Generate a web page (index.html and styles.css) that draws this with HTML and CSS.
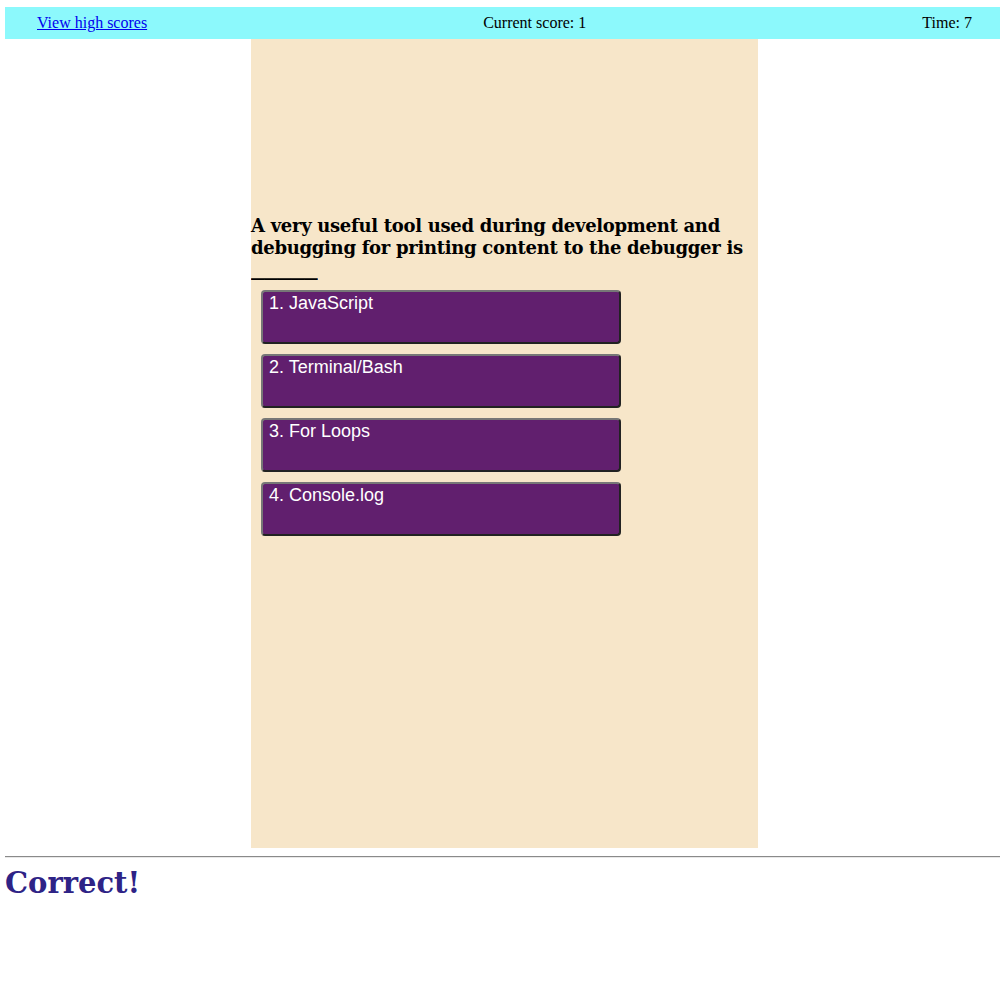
FILE: index.html
```html
<!DOCTYPE html>
<html lang="en">
<head>
<meta charset="utf-8">
<title>Code Quiz</title>
<link rel="stylesheet" href="styles.css">
</head>
<body>
  <header class="topbar">
    <a class="scores-link" href="#">View high scores</a>
    <span class="score">Current score: 1</span>
    <span class="timer">Time: 7</span>
  </header>
  <main class="quiz">
    <h2 class="question">A very useful tool used during development and debugging for printing content to the debugger is <span class="blank">_____</span></h2>
    <div class="choices">
      <button class="choice">1. JavaScript</button>
      <button class="choice">2. Terminal/Bash</button>
      <button class="choice">3. For Loops</button>
      <button class="choice">4. Console.log</button>
    </div>
  </main>
  <hr class="divider">
  <h1 class="result">Correct!</h1>
</body>
</html>
```
FILE: styles.css
```css
html, body {
  background: #ffffff;
}

body {
  margin: 7px 0 0 5px;
  font-family: "Liberation Serif", "Times New Roman", serif;
  font-size: 16px;
  color: #000;
}

.topbar {
  display: flex;
  justify-content: space-between;
  align-items: center;
  height: 32px;
  padding: 0 28px 0 32px;
  background: #8cf9fc;
  box-sizing: border-box;
}

.scores-link {
  color: #0000ee;
  text-decoration: underline;
}

.quiz {
  box-sizing: border-box;
  width: 507px;
  height: 809px;
  margin-left: 246px;
  padding-top: 176px;
  background: #f7e6c9;
}

.question {
  margin: 0;
  font-family: "DejaVu Serif", Georgia, serif;
  font-weight: bold;
  font-size: 18px;
  letter-spacing: -0.3px;
  line-height: 22px;
  color: #000;
}

.blank {
  display: inline-block;
  transform: scaleX(1.52);
  transform-origin: left center;
}

.choices {
  display: flex;
  flex-direction: column;
  gap: 10px;
  margin: 9px 0 0 10px;
}

.choice {
  box-sizing: border-box;
  width: 360px;
  height: 54px;
  padding: 1px 6px 28px;
  text-align: left;
  font-family: "Liberation Sans", Arial, sans-serif;
  font-size: 18px;
  line-height: 21px;
  color: #ffffff;
  background: #611f6e;
  border: 2px solid;
  border-color: #777777 #222222 #222222 #777777;
  border-radius: 4px;
  cursor: pointer;
}

.divider {
  margin: 8px 0 0 0;
  border: none;
  border-top: 1px solid #8a8a8a;
  border-bottom: 1px solid #e8e8e8;
  height: 0;
}

.result {
  margin: 8px 0 0 0;
  font-family: "DejaVu Serif", Georgia, serif;
  font-weight: bold;
  font-size: 29px;
  color: #2e2386;
}
```
